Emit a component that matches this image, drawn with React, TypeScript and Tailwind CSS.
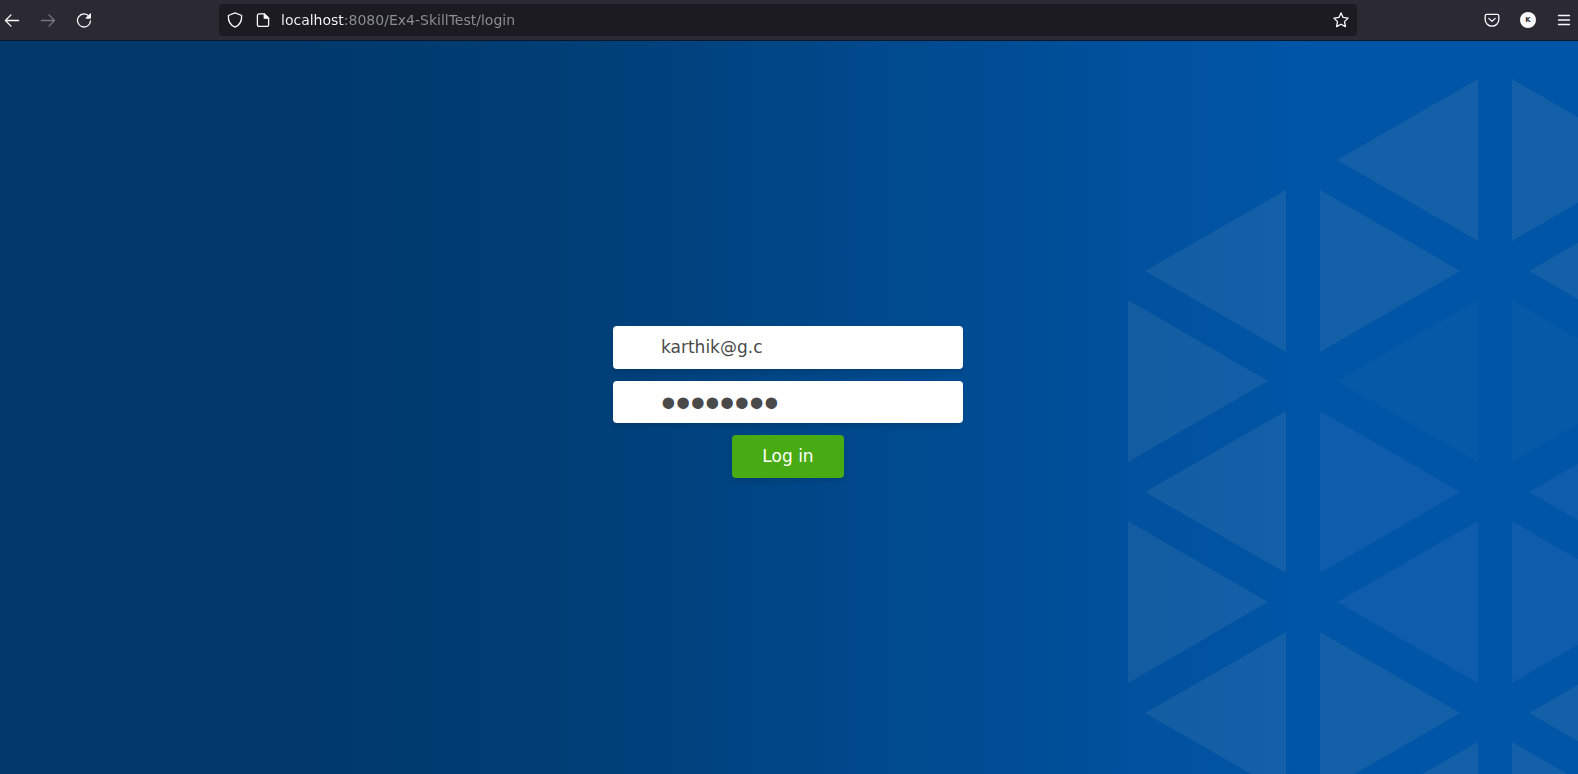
import type { ReactNode } from "react";

type Triangle = { x: number; y: number; dir: "left" | "right"; fill: string };

const BRIGHT = "rgb(240 224 205 / 0.08)";
const MEDIUM = "rgb(255 225 255 / 0.055)";
const FAINT = "rgb(255 255 190 / 0.025)";

/* x is the tip of the triangle, y its vertical middle. */
const TRIANGLES: Triangle[] = [
  { x: 209, y: 119, dir: "left", fill: BRIGHT },
  { x: 524, y: 119, dir: "right", fill: BRIGHT },
  { x: 17, y: 230, dir: "left", fill: BRIGHT },
  { x: 332, y: 230, dir: "right", fill: BRIGHT },
  { x: 401, y: 230, dir: "left", fill: BRIGHT },
  { x: 140, y: 340, dir: "right", fill: BRIGHT },
  { x: 209, y: 340, dir: "left", fill: FAINT },
  { x: 524, y: 340, dir: "right", fill: FAINT },
  { x: 17, y: 451, dir: "left", fill: BRIGHT },
  { x: 332, y: 451, dir: "right", fill: MEDIUM },
  { x: 401, y: 451, dir: "left", fill: MEDIUM },
  { x: 140, y: 561, dir: "right", fill: BRIGHT },
  { x: 209, y: 561, dir: "left", fill: MEDIUM },
  { x: 524, y: 561, dir: "right", fill: MEDIUM },
  { x: 17, y: 672, dir: "left", fill: BRIGHT },
  { x: 332, y: 672, dir: "right", fill: BRIGHT },
  { x: 401, y: 672, dir: "left", fill: BRIGHT },
  { x: 209, y: 782, dir: "left", fill: BRIGHT },
  { x: 524, y: 782, dir: "right", fill: BRIGHT },
];

function points({ x, y, dir }: Triangle) {
  const base = dir === "left" ? x + 141 : x - 140;
  return `${x},${y} ${base},${y - 81} ${base},${y + 81}`;
}

function TrianglePattern() {
  return (
    <svg
      className="pointer-events-none absolute top-0 right-0"
      width="450"
      height="900"
      viewBox="0 0 450 900"
      aria-hidden="true"
    >
      {TRIANGLES.map((t) => (
        <polygon key={`${t.x}-${t.y}`} points={points(t)} fill={t.fill} />
      ))}
    </svg>
  );
}

function Icon({ children }: { children: ReactNode }) {
  return (
    <svg
      className="size-4"
      viewBox="0 0 16 16"
      fill="none"
      stroke="currentColor"
      strokeWidth="1.3"
      strokeLinecap="round"
      strokeLinejoin="round"
      aria-hidden="true"
    >
      {children}
    </svg>
  );
}

function ToolButton({ label, disabled, children }: { label: string; disabled?: boolean; children: ReactNode }) {
  return (
    <button type="button" aria-label={label} disabled={disabled} className="shrink-0 disabled:text-[#77767d]">
      {children}
    </button>
  );
}

function Toolbar() {
  return (
    <header className="flex h-10 shrink-0 items-center bg-[#2b2a33] pr-1.5 pl-1 text-[#fbfbfe]">
      <nav aria-label="Navigation" className="flex w-[215px] shrink-0 items-center gap-5">
        <ToolButton label="Back">
          <Icon>
            <path d="M14.6 8.5H1.4M7 2.9 1.4 8.5 7 14.1" />
          </Icon>
        </ToolButton>
        <ToolButton label="Forward" disabled>
          <Icon>
            <path d="M1.4 8.5h13.2M9 2.9l5.6 5.6L9 14.1" />
          </Icon>
        </ToolButton>
        <ToolButton label="Reload">
          <Icon>
            <path d="M13.1 4.4A6.5 6.5 0 1 0 14.5 9" />
            <path d="M14.5 2v4.2h-4.2z" fill="currentColor" strokeWidth="1" />
          </Icon>
        </ToolButton>
      </nav>

      <div className="flex h-8 flex-1 items-center gap-3 rounded bg-[#1c1b22] px-2">
        <ToolButton label="Tracking protection">
          <Icon>
            <path d="M8 .9 14.6 3.5C15 8.6 12.8 13 8 15.2 3.2 13 1 8.6 1.4 3.5z" />
          </Icon>
        </ToolButton>
        <ToolButton label="Site information">
          <Icon>
            <path d="M9.3 1.9H4a1.6 1.6 0 0 0-1.6 1.6v9.3A1.6 1.6 0 0 0 4 14.4h8a1.6 1.6 0 0 0 1.6-1.6V6.2z" />
            <path d="M9.3 1.9v4.3h4.3z" fill="currentColor" />
          </Icon>
        </ToolButton>
        <input
          type="text"
          aria-label="Address"
          defaultValue="localhost:8080/Ex4-SkillTest/login"
          className="-ml-0.5 h-6 min-w-0 flex-1 bg-[linear-gradient(90deg,#fbfbfe_63px,#8f8f96_63px)] bg-clip-text text-sm text-transparent outline-none"
        />
        <ToolButton label="Bookmark this page">
          <Icon>
            <path d="M8 .9l2.1 4.5 5 .7-3.6 3.5.9 5L8 12.2l-4.4 2.4.9-5L.9 6.1l5-.7z" />
          </Icon>
        </ToolButton>
      </div>

      <div className="flex shrink-0 items-center gap-5 pl-[127px]">
        <ToolButton label="Save to Pocket">
          <Icon>
            <path d="M2.6 2.4h10.8c.8 0 1.4.6 1.4 1.4v3.6a6.8 6.8 0 0 1-13.6 0V3.8c0-.8.6-1.4 1.4-1.4z" />
            <path d="M4.8 6.4 8 9.4l3.2-3" />
          </Icon>
        </ToolButton>
        <button
          type="button"
          aria-label="Account"
          className="flex size-4 shrink-0 items-center justify-center rounded-full bg-[#fbfbfe] text-[7px] leading-none font-bold text-[#2b2a33]"
        >
          K
        </button>
        <ToolButton label="Menu">
          <Icon>
            <path d="M2.5 3.5h11M2.5 8h11M2.5 12.5h11" />
          </Icon>
        </ToolButton>
      </div>
    </header>
  );
}

export default function App() {
  return (
    <div className="flex min-h-screen flex-col font-['DejaVu_Sans',sans-serif]">
      <Toolbar />
      <main className="relative flex flex-1 flex-col items-center justify-center overflow-hidden border-t border-[#08172b] bg-[linear-gradient(90deg,#00386b_0%,#00386b_18%,#003e75_35%,#00488a_53%,#0052a0_74%,#0055a7_84%)] pr-0.5 pb-[11px]">
        <TrianglePattern />
        <form className="relative flex w-[350px] flex-col items-center gap-3" onSubmit={(e) => e.preventDefault()}>
          <input
            type="email"
            aria-label="Email"
            defaultValue="karthik@g.c"
            className="h-[43px] w-full rounded bg-white px-12 pb-0.5 text-[17px] text-[#4a4a4a] shadow-md outline-none"
          />
          <input
            type="password"
            aria-label="Password"
            defaultValue="password"
            className="h-[42px] w-full rounded bg-white px-12 pt-0.5 font-['Liberation_Sans',sans-serif] text-[42px] leading-10 text-[#4a4a4a] shadow-md outline-none"
          />
          <button type="submit" className="h-[43px] rounded bg-[#48ab13] px-[30px] text-[17px] text-white shadow-md">
            Log in
          </button>
        </form>
      </main>
    </div>
  );
}
